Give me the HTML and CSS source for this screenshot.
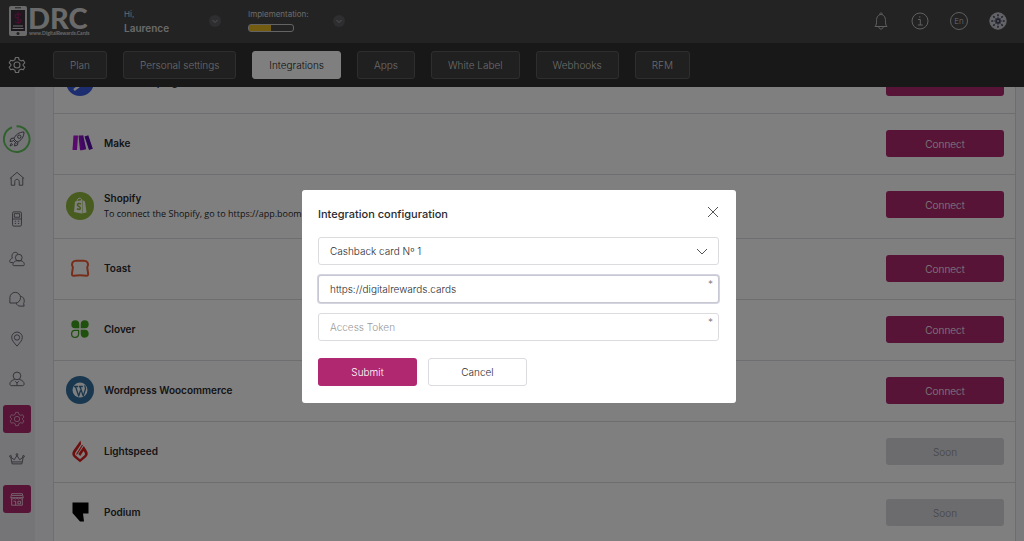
FILE: index.html
```html
<!DOCTYPE html>
<html lang="en">
<head>
    <meta charset="UTF-8">
    <meta name="viewport" content="width=device-width, initial-scale=1.0">
    <title>Integrations</title>
    <link rel="stylesheet" href="styles.css">
</head>
<body>
    <svg width="0" height="0" class="sprite" aria-hidden="true">
        <symbol id="gear" viewBox="0 0 24 24">
            <path d="M10 2h4l.8 3 2.6 1.500 3-.9 2 3.500-2.200 2.100v1.600l2.200 2.100-2 3.500-3-.9-2.600 1.500-.8 3h-4l-.8-3-2.600-1.500-3 .9-2-3.500 2.200-2.100v-1.600L1.600 9.100l2-3.500 3 .9L9.200 5z"/>
            <circle cx="12" cy="12" r="4"/>
        </symbol>
        <symbol id="chevron" viewBox="0 0 12 12">
            <circle cx="6" cy="6" r="6" class="chevron-bg"/>
            <path d="M3.500 5L6 7.500 8.500 5"/>
        </symbol>
    </svg>

    <header class="header">
        <div class="topbar">
            <a href="#" class="logo">
                <svg class="logo-phone" viewBox="0 0 18 30">
                    <rect width="18" height="30" rx="2" fill="#d4d4d4"/>
                    <rect x="2" y="4" width="14" height="21" fill="#38303a"/>
                    <path d="M6 1.800h6" stroke="#444" stroke-width="1"/>
                    <path d="M12 9.500c-1-2-6-2-6 .6s6 2 6 4.700-5 2.700-6 .5M9 6v12" fill="none" stroke="#8c1f5c" stroke-width="1.400"/>
                    <path d="M4 20h10M3.500 22.500h11" stroke="#d4d4d4" stroke-width="1"/>
                    <circle cx="9" cy="27.400" r="1.500" fill="#444"/>
                </svg>
                <span class="logo-text">
                    <strong>DRC</strong>
                    <small>www.DigitalRewards.Cards</small>
                </span>
            </a>
            <div class="top-block">
                <div class="top-info">
                    <span>Hi,</span>
                    <strong>Laurence</strong>
                </div>
                <button class="round-btn" aria-label="Account menu"><svg><use href="#chevron"/></svg></button>
            </div>
            <div class="top-block">
                <div class="top-info">
                    <span>Implementation:</span>
                    <div class="progress"><div class="progress-fill" style="width: 50%"></div></div>
                </div>
                <button class="round-btn" aria-label="Implementation steps"><svg><use href="#chevron"/></svg></button>
            </div>
            <div class="top-icons">
                <button aria-label="Notifications">
                    <svg viewBox="0 0 18 18"><path d="M3 14.500c1.500-1.500 1.500-3 1.500-6C4.500 5 6.500 2.500 9 2.500S13.500 5 13.500 8.500c0 3 0 4.500 1.500 6zM7.500 2.500C7.500 .5 10.500 .5 10.500 2.500M6.800 14.800c.2 3 4.200 3 4.400 0"/></svg>
                </button>
                <button aria-label="Information">
                    <svg viewBox="0 0 18 18"><circle cx="9" cy="9" r="8"/><path d="M7 7.500h2.300V13M6.800 13h5M8.800 4.200v1.500"/></svg>
                </button>
                <button class="lang">En</button>
                <button aria-label="Profile">
                    <svg viewBox="0 0 18 18">
                        <circle cx="9" cy="9" r="8.200" fill="#c8c8d0" stroke="#c8c8d0"/>
                        <path d="M9 9V2M9 9l5-5M9 9h7M9 9l5 5M9 9v7M9 9l-5 5M9 9H2M9 9L4 4" stroke="#3c4058" stroke-width="1.600" stroke-dasharray="3.500 1.200 2"/>
                        <circle cx="9" cy="9" r="1.500" fill="#c8c8d0" stroke="#3c4058"/>
                    </svg>
                </button>
            </div>
        </div>
        <nav class="tabs">
            <a href="#" class="tabs-gear" aria-label="Settings"><svg><use href="#gear"/></svg></a>
            <a href="#" class="tab">Plan</a>
            <a href="#" class="tab">Personal settings</a>
            <a href="#" class="tab active">Integrations</a>
            <a href="#" class="tab">Apps</a>
            <a href="#" class="tab">White Label</a>
            <a href="#" class="tab">Webhooks</a>
            <a href="#" class="tab">RFM</a>
        </nav>
    </header>

    <div class="page">
        <aside class="sidebar">
            <a href="#" class="side-link" aria-label="Getting started">
                <svg class="ring" viewBox="0 0 28 28">
                    <path d="M13.500 1.300A12.800 12.800 0 1 1 9 2.200" stroke="#62c45c" stroke-width="2"/>
                    <path d="M11 14c1-4 5-7 10-7 0 5-3 9-7 10zM11 13l-3 .5-1 3 3-.5M15 17l-.5 3-3 1 .5-3M10 15l3.500 3.500M8.500 18l-1.500 3 3-1.500"/>
                    <circle cx="16.300" cy="11.700" r="1.700"/>
                </svg>
            </a>
            <a href="#" class="side-link" aria-label="Home">
                <svg viewBox="0 0 18 18"><path d="M1 8.500L9 1.500l8 7M2.500 7.500v8.500h4v-4c0-3.500 5-3.500 5 0v4h4V7.500"/></svg>
            </a>
            <a href="#" class="side-link" aria-label="Terminal">
                <svg viewBox="0 0 18 18"><rect x="4" y="1" width="10" height="16" rx="1.500"/><path d="M4 9h10M6 3h6v4H6zM6.500 11.500h1.500M10 11.500h1.500M6.500 14h1.500M10 14h1.500"/></svg>
            </a>
            <a href="#" class="side-link" aria-label="Customers">
                <svg viewBox="0 0 18 18"><circle cx="11" cy="7.500" r="3.800"/><path d="M5 16.500c-1.500-1 0-5 3.500-5.500h5c3.500.5 4.500 4.500 3 5.500zM4.500 13H1.500C0 12 1 9 3.800 8 2.500 5 4 1.500 7 1.500c1.500 0 2.500.6 3.200 1.800"/></svg>
            </a>
            <a href="#" class="side-link" aria-label="Messages">
                <svg viewBox="0 0 18 18"><path d="M1 13.500V7.500a6 6 0 1 1 6 6zM13 6c4 .5 5 5 3.500 8l.5 3h-4.500c-2 0-3.800-1.200-4.500-3.500"/></svg>
            </a>
            <a href="#" class="side-link" aria-label="Locations">
                <svg viewBox="0 0 18 18"><path d="M9 17C6 13.500 3 10.500 3 7.200a6 6 0 0 1 12 0C15 10.500 12 13.500 9 17z"/><circle cx="9" cy="7.300" r="3"/></svg>
            </a>
            <a href="#" class="side-link" aria-label="Managers">
                <svg viewBox="0 0 18 18"><circle cx="9" cy="5.500" r="4.300"/><path d="M6.500 9.500c-4 1-5.500 3-5.500 5 0 1 .5 2 1.500 2h13c1 0 1.500-1 1.500-2 0-2-1.500-4-5.500-5M7 11.500l2 2 2-2M9 13.500v3"/></svg>
            </a>
            <a href="#" class="side-link active" aria-label="Settings"><svg><use href="#gear"/></svg></a>
            <a href="#" class="side-link" aria-label="Loyalty">
                <svg viewBox="0 0 18 18"><path d="M3.500 14.500L2 7l4 2.800L9 5l3 4.800L16 7l-1.500 7.500zM3.500 12.300h11"/><circle cx="9" cy="4" r="1"/><circle cx="1.700" cy="6" r="1"/><circle cx="16.300" cy="6" r="1"/></svg>
            </a>
            <a href="#" class="side-link active" aria-label="Store">
                <svg viewBox="0 0 18 18"><path d="M3 3h12l1 4.500H2zM3 9v7h12V9M3 5h12M2 7.500c.5 2 3 2 3.500 0 .5 2 3 2 3.500 0 .5 2 3 2 3.500 0 .5 2 3 2 3.500 0M5 11.500h2.500V16M10 11.500h3v3h-3z"/></svg>
            </a>
        </aside>

        <main class="content">
            <ul class="list">
                <li class="row">
                    <svg class="brand" viewBox="0 0 28 28"><circle cx="14" cy="14" r="14" fill="#3a5ce0"/><path d="M9 6l10 7.500L8 22" fill="none" stroke="#fff" stroke-width="2.400"/></svg>
                    <div class="row-text"><h3>ActiveCampaign</h3></div>
                    <button class="btn primary">Connect</button>
                </li>
                <li class="row">
                    <svg class="brand" viewBox="0 0 28 28">
                        <path d="M7.500 6.500h4.500l-1 14.500H6.500z" fill="#b414d8"/>
                        <path d="M13 6.800l4.200-.6 3 14-4.600 1z" fill="#7b10c0"/>
                        <path d="M12.500 6.800l1.800-.3 3 14.500-3.300.2z" fill="#9412cc"/>
                        <path d="M18.500 7.500l3.800-1.200 4.500 13.500-3.800 1.300z" fill="#5c0cac"/>
                    </svg>
                    <div class="row-text"><h3>Make</h3></div>
                    <button class="btn primary">Connect</button>
                </li>
                <li class="row">
                    <svg class="brand" viewBox="0 0 28 28">
                        <circle cx="14" cy="14" r="14" fill="#8fb83c"/>
                        <path d="M9 9.500l7.500-1.500L19 9.500l1.500 11-5 1-7.500-1.500z" fill="#fff"/>
                        <path d="M11 10c0-5 5-5 5-1" fill="none" stroke="#fff"/>
                        <path d="M15 12c-2-1.200-3.800-.2-3.500 1 .3 1.500 3 1.500 2.800 3.300-.2 1.200-2 1.500-3.300.4" fill="none" stroke="#8fb83c" stroke-width="1.600"/>
                        <path d="M16.500 8v13.500" stroke="#8fb83c" stroke-width=".5"/>
                    </svg>
                    <div class="row-text">
                        <h3>Shopify</h3>
                        <p>To connect the Shopify, go to https://app.boome</p>
                    </div>
                    <button class="btn primary">Connect</button>
                </li>
                <li class="row">
                    <svg class="brand" viewBox="0 0 28 28"><path d="M7.500 21.700c-1.300 0-1.700-.6-1.500-2l.9-6.500C4.800 10 6.500 6.700 10 6.700h8c3.500 0 5.200 3.300 3.200 6.500l.9 6.500c.2 1.400-.2 2-1.500 2-4-.5-9-.5-13.100 0z" fill="none" stroke="#f05a34" stroke-width="2"/></svg>
                    <div class="row-text"><h3>Toast</h3></div>
                    <button class="btn primary">Connect</button>
                </li>
                <li class="row">
                    <svg class="brand" viewBox="0 0 28 28">
                        <g fill="#3fa01c">
                            <path d="M13.300 13.300H9A4 4 0 1 1 13.300 9z"/>
                            <path d="M14.700 13.300H19A4 4 0 1 0 14.700 9z"/>
                            <path d="M14.700 14.700H19a4 4 0 1 1-4.300 4.300z"/>
                        </g>
                        <path d="M12.600 15.400H9A3.500 3.500 0 1 0 12.600 19z" fill="#fff" stroke="#3fa01c" stroke-width="1.300"/>
                    </svg>
                    <div class="row-text"><h3>Clover</h3></div>
                    <button class="btn primary">Connect</button>
                </li>
                <li class="row">
                    <svg class="brand" viewBox="0 0 28 28">
                        <circle cx="14" cy="14" r="14" fill="#33709e"/>
                        <circle cx="14" cy="14" r="7.500" fill="#fff"/>
                        <path d="M8 10.500h4M9.500 10.500l3.200 9.500 1.800-5.500M12.800 10.500h4M14 10.500l3.200 9.500 2.300-7c.4-1.500-1-2.300-.5-3.800" fill="none" stroke="#33709e" stroke-width="1.300"/>
                    </svg>
                    <div class="row-text"><h3>Wordpress Woocommerce</h3></div>
                    <button class="btn primary">Connect</button>
                </li>
                <li class="row">
                    <svg class="brand" viewBox="0 0 28 28">
                        <path d="M14.500 3.500l.6 3.500-5.600 8.500c-.8 1.300-.6 2.200.3 3.100L14 22.300l4.200-3.700c1-1 1-2 .3-3.200L17.500 14l-3.200 5-2-2L17.800 9l3 4.800c1.500 2.500 1.200 4.700-.8 6.500L14 25.200l-6-4.900c-2-1.800-2.200-4-.8-6.500z" fill="#dc2020"/>
                        <path d="M16.500 8l-6 9.500" fill="none" stroke="#dc2020" stroke-width="1.200"/>
                    </svg>
                    <div class="row-text"><h3>Lightspeed</h3></div>
                    <button class="btn" disabled>Soon</button>
                </li>
                <li class="row">
                    <svg class="brand" viewBox="0 0 28 28"><path d="M6.500 4.500h16v11h-5.500l1 8h-4l-7.500-8.500z" fill="#000"/></svg>
                    <div class="row-text"><h3>Podium</h3></div>
                    <button class="btn" disabled>Soon</button>
                </li>
            </ul>
        </main>
    </div>

    <div class="overlay">
        <form class="modal" role="dialog" aria-labelledby="modal-title">
            <div class="modal-head">
                <h2 id="modal-title">Integration configuration</h2>
                <button type="button" class="close" aria-label="Close">
                    <svg viewBox="0 0 12 12"><path d="M1 1l10 10M11 1L1 11"/></svg>
                </button>
            </div>
            <div class="field">
                <select id="card" name="card" aria-label="Card">
                    <option>Cashback card Nº 1</option>
                </select>
                <svg class="select-arrow" viewBox="0 0 12 8"><path d="M1 1l5 5 5-5"/></svg>
            </div>
            <div class="field">
                <input type="text" class="focused" id="url" name="url" aria-label="URL" value="https://digitalrewards.cards">
                <span class="required">*</span>
            </div>
            <div class="field">
                <input type="text" id="token" name="token" aria-label="Access Token" placeholder="Access Token">
                <span class="required">*</span>
            </div>
            <div class="modal-actions">
                <button type="submit" class="btn primary">Submit</button>
                <button type="button" class="btn outline">Cancel</button>
            </div>
        </form>
    </div>
</body>
</html>
```

FILE: styles.css
```css
:root {
    --primary-color: #b0286f;
    --border-color: #dcdce0;
    --text-color: #2a2a2e;
}

* {
    box-sizing: border-box;
}

body {
    margin: 0;
    font-family: Inter, "Open Sans", sans-serif;
    font-size: 10px;
    font-weight: 300;
    line-height: 14px;
    color: var(--text-color);
    background-color: #f4f4fa;
}

h2, h3, p, ul {
    margin: 0;
    padding: 0;
}

a {
    color: inherit;
    text-decoration: none;
}

button, input, select {
    font: inherit;
    color: inherit;
}

button {
    padding: 0;
    border: none;
    background: none;
    cursor: pointer;
}

svg {
    display: block;
    fill: none;
    stroke-linejoin: round;
}

.sprite {
    position: absolute;
}

/* header */
.header {
    position: fixed;
    top: 0;
    left: 0;
    right: 0;
    z-index: 1;
    color: #d4d4d4;
}

.topbar {
    display: flex;
    align-items: center;
    height: 43px;
    padding: 0 17px 0 9px;
    background-color: #464646;
}

.logo {
    display: flex;
    gap: 1px;
    width: 115px;
}

.logo-phone {
    width: 18px;
    height: 30px;
}

.logo-text {
    display: flex;
    flex-direction: column;
    font-family: Lato, sans-serif;
}

.logo-text strong {
    font-size: 29px;
    font-weight: 900;
    line-height: 23px;
}

.logo-text small {
    padding-left: 1px;
    font-size: 5px;
    font-weight: 700;
    line-height: 8px;
}

.top-block {
    display: flex;
    align-items: center;
    justify-content: space-between;
    width: 97px;
    margin-right: 27px;
    padding-bottom: 2px;
}

.top-info {
    display: flex;
    flex-direction: column;
    font-size: 8px;
    font-weight: 400;
}

.top-info strong {
    font-size: 10px;
    font-weight: 600;
}

.progress {
    width: 46px;
    height: 8px;
    margin: 3px 0;
    border: 1px solid #c8c8c8;
    border-radius: 3px;
}

.progress-fill {
    height: 100%;
    background-color: #e6b81e;
}

.round-btn svg {
    width: 12px;
    height: 12px;
    stroke: #a8a8b0;
}

.chevron-bg {
    fill: #5c5c62;
    stroke: none;
}

.top-icons {
    display: flex;
    gap: 21px;
    margin-left: auto;
    padding-bottom: 1px;
}

.top-icons svg {
    width: 18px;
    height: 18px;
    stroke: #c0c0c0;
}

.lang {
    width: 18px;
    height: 18px;
    border: 1px solid #c0c0c0;
    border-radius: 50%;
    font-size: 8px;
}

.tabs {
    display: flex;
    align-items: center;
    gap: 16px;
    height: 44px;
    padding-left: 8px;
    background-color: #303030;
}

.tabs-gear {
    width: 29px;
}

.tabs-gear svg {
    width: 18px;
    height: 18px;
    stroke: #d8d8d8;
    stroke-width: 1.5;
}

.tab {
    padding: 6px 16px;
    border: 1px solid #5c5c5c;
    border-radius: 3px;
    background-color: #404040;
}

.tab.active {
    border-color: #fff;
    background-color: #fff;
    color: #222;
}

/* page */
.page {
    display: flex;
    height: 100vh;
    overflow: hidden;
}

.sidebar {
    display: flex;
    flex-direction: column;
    gap: 12px;
    width: 35px;
    padding: 125px 0 0 3px;
    background-color: #eaeaf0;
}

.side-link {
    display: flex;
    flex-shrink: 0;
    align-items: center;
    justify-content: center;
    width: 28px;
    height: 28px;
    border-radius: 3px;
    color: #5c5c66;
}

.side-link svg {
    width: 16px;
    height: 16px;
    stroke: currentColor;
}

.side-link .ring {
    width: 28px;
    height: 28px;
}

.side-link.active {
    background-color: var(--primary-color);
    color: #f0d4e4;
}

.content {
    flex: 1;
    padding: 53px 8px 0 18px;
}

.list {
    list-style: none;
    border: 1px solid var(--border-color);
    border-top: none;
    background-color: #fff;
}

.row {
    display: flex;
    align-items: center;
    padding: 15px 11px 17px 12px;
    border-bottom: 1px solid var(--border-color);
}

.row .btn {
    align-self: flex-start;
    width: 118px;
    margin-top: 1px;
}

.brand {
    width: 28px;
    height: 28px;
}

.row-text {
    flex: 1;
    margin-left: 10px;
}

.row-text h3 {
    font-size: 10px;
    font-weight: 600;
    line-height: 16px;
}

.row-text p {
    font-family: "Open Sans", sans-serif;
    font-size: 9px;
    font-weight: 400;
    line-height: 15px;
}

.btn {
    height: 27px;
    border: 1px solid transparent;
    border-radius: 3px;
}

.btn:disabled {
    background-color: #d8d8dc;
    color: #8c8c92;
}

.btn.primary {
    background-color: var(--primary-color);
    color: #fff;
}

.btn.outline {
    border-color: var(--border-color);
    background-color: #fff;
}

/* modal */
.overlay {
    position: fixed;
    inset: 0;
    z-index: 2;
    display: flex;
    align-items: center;
    justify-content: center;
    padding: 52px 0 0 14px;
    background-color: rgba(0, 0, 0, 0.5);
}

.modal {
    width: 100%;
    max-width: 434px;
    padding: 16px 17px 17px 16px;
    border-radius: 3px;
    background-color: #fff;
}

.modal-head {
    display: flex;
    align-items: flex-start;
    justify-content: space-between;
    height: 31px;
}

.modal-head h2 {
    font-size: 11px;
    font-weight: 500;
    line-height: 16px;
}

.close svg {
    width: 12px;
    height: 12px;
    stroke: #555;
}

.field {
    position: relative;
    margin-bottom: 10px;
}

.field input, .field select {
    display: block;
    width: 100%;
    height: 28px;
    padding: 0 11px;
    border: 1px solid var(--border-color);
    border-radius: 3px;
    background-color: #fff;
    appearance: none;
    outline: none;
}

.field input::placeholder {
    color: #999;
}

.field .focused {
    border-color: #c8c8d4;
    box-shadow: 0 0 0 1px #d4d4de;
}

.select-arrow {
    position: absolute;
    top: 11px;
    right: 11px;
    width: 12px;
    height: 8px;
    stroke: #555;
    pointer-events: none;
}

.required {
    position: absolute;
    top: 2px;
    right: 6px;
    color: #777;
}

.modal-actions {
    display: flex;
    gap: 11px;
    padding-top: 7px;
}

.modal-actions .btn {
    width: 99px;
    height: 28px;
}
```
